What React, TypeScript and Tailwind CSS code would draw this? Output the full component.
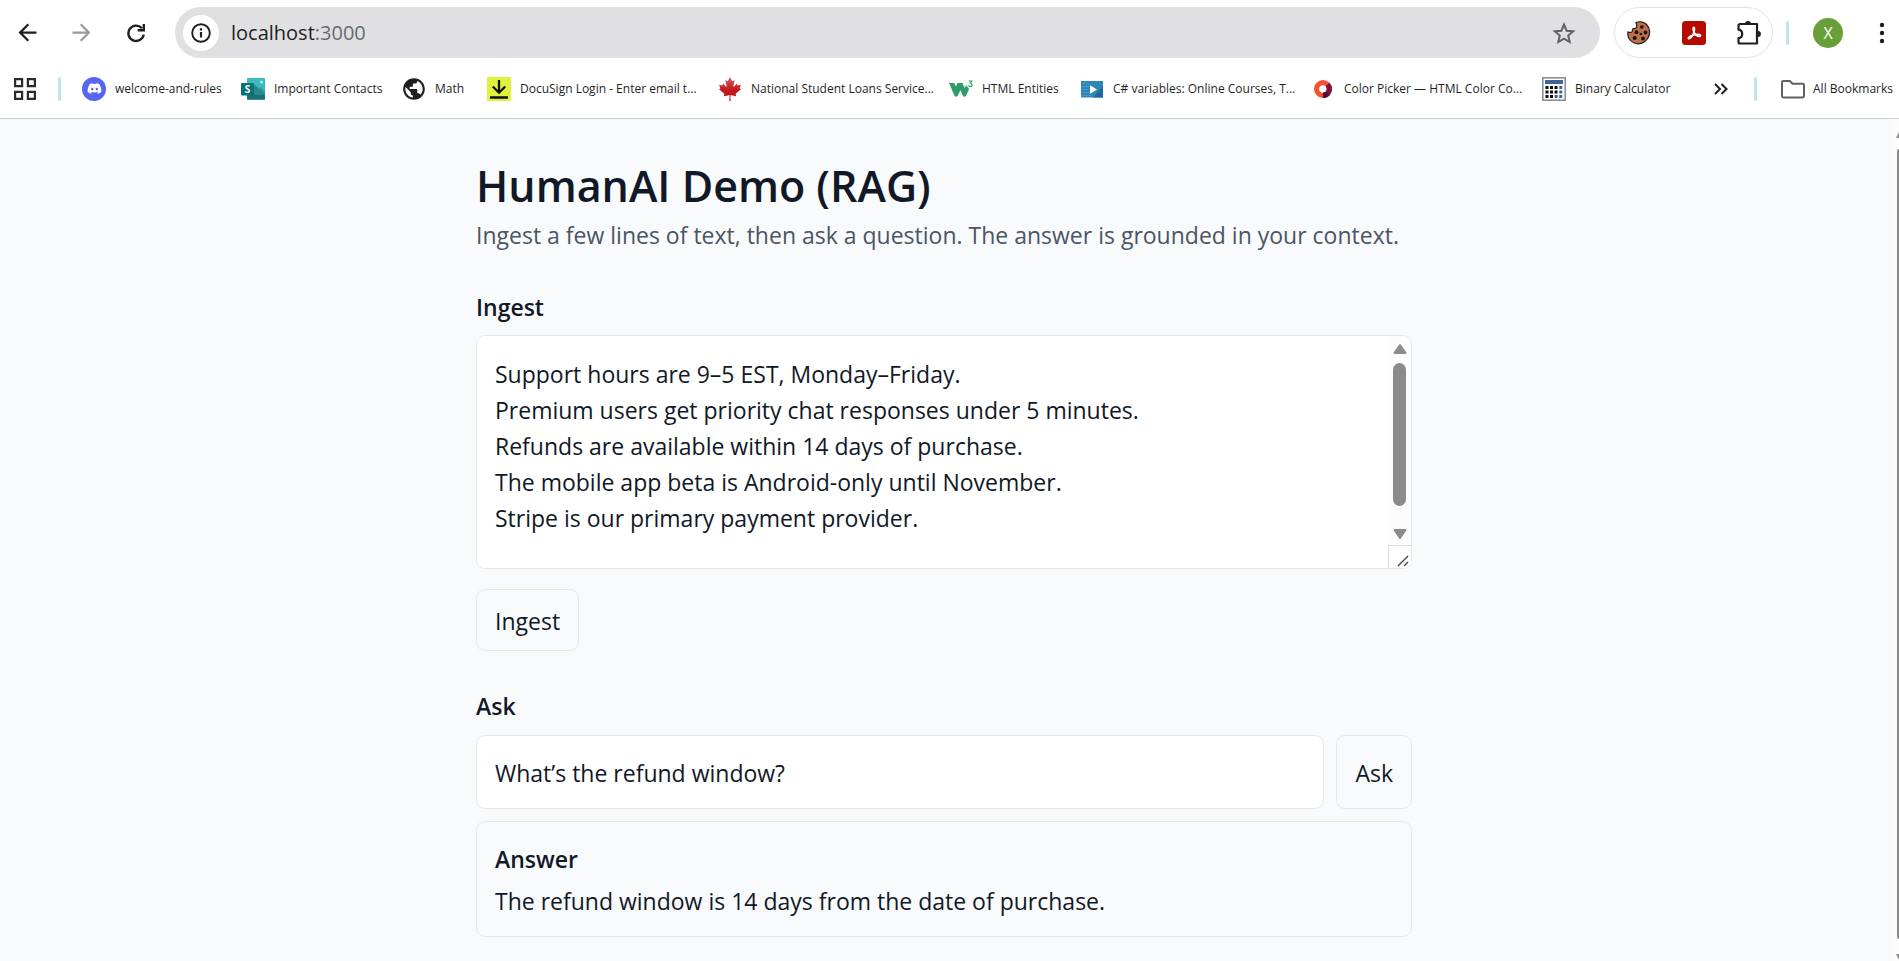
import { useState, type ReactNode } from "react";
import { FaCanadianMapleLeaf, FaDiscord } from "react-icons/fa";
import { MdArrowBack, MdArrowForward, MdPublic } from "react-icons/md";

function ReloadIcon() {
  return (
    <svg viewBox="0 0 20 20" className="size-5" fill="none" stroke="#1f1f1f" strokeWidth="2.4">
      <path d="M15.9 5.2A7.7 7.7 0 1 0 17.7 11.6" />
      <path d="M17.8 1v6.2h-6.2" />
    </svg>
  );
}

function InfoIcon() {
  return (
    <svg viewBox="0 0 20 20" className="size-5" fill="none" stroke="#1f1f1f" strokeWidth="1.9">
      <circle cx="10" cy="10" r="8.8" />
      <path d="M10 9v5.6M10 5.2v2.2" strokeWidth="2.2" />
    </svg>
  );
}

function StarIcon() {
  return (
    <svg viewBox="0 0 24 24" className="size-6" fill="none" stroke="#5f6064" strokeWidth="2">
      <path d="M12 3.6l2.6 6.1 6.6.5-5 4.4 1.5 6.4L12 17.6 6.300 21l1.500-6.400-5-4.400 6.600-.5z" strokeLinejoin="miter" />
    </svg>
  );
}

function CookieIcon() {
  return (
    <svg viewBox="0 0 24 24" className="size-6">
      <path
        d="M9 1.500C12 .2 16.500.5 19.500 3.500c3.500 3.500 4.200 9.500 1.200 14-3 5-9.500 6.500-14 4.200C2.500 19.500.3 15.500 1 11c1.500.8 3.800.5 4.200-.6.500-1.200-.1-1.800.5-2.400.7-.7 2.100.1 3.300-1 1.200-1.200.6-3.800 0-5.500z"
        fill="#b9714d"
        stroke="#2b1a14"
        strokeWidth="1.200"
      />
      <g fill="#20100c">
        <circle cx="14.800" cy="6" r="1.800" />
        <circle cx="9.500" cy="11.200" r="1.900" />
        <circle cx="18.500" cy="11.500" r="1.900" />
        <circle cx="13.800" cy="13" r="1.300" />
        <circle cx="7.700" cy="17" r="2" />
        <circle cx="16" cy="17.500" r="2" />
      </g>
    </svg>
  );
}

function AcrobatIcon() {
  return (
    <svg viewBox="0 0 24 24" className="size-6">
      <rect width="24" height="24" rx="3.500" fill="#b30b00" />
      <g fill="none" stroke="#fff" strokeWidth="1.600" strokeLinejoin="round" strokeLinecap="round">
        <path d="M12 11.500C11 9.200 10.700 6.500 11.700 6.300c1.200-.1 1 2.700-.1 5.700" />
        <path d="M11.600 12c-1.300 3.200-3.600 6-5 5.700-1.200-.6 1.200-2.700 4-3.500" />
        <path d="M12 11.500c1.500 2.400 4 4.200 5.800 3.900 1.400-.4.900-2-2-2-1.800 0-3.600.3-5.200.8" />
      </g>
    </svg>
  );
}

function PuzzleIcon() {
  return (
    <svg viewBox="0 0 24 24" className="size-6">
      <path
        d="M3 3h17v19.500H3a1.500 1.500 0 0 1-1.500-1.500v-3.800c2.300-.3 3.700-2 3.700-4.200S3.800 9 1.500 8.700V4.500A1.500 1.500 0 0 1 3 3z"
        fill="none"
        stroke="#1f1f1f"
        strokeWidth="2.200"
        strokeLinejoin="round"
      />
      <path d="M8 3a3 3 0 0 1 6 0zM21 10a2.900 2.900 0 0 1 0 5.800z" fill="#1f1f1f" />
    </svg>
  );
}

function MenuDotsIcon() {
  return (
    <svg viewBox="0 0 6 22" className="h-[22px] w-[6px]" fill="#1f1f1f">
      <circle cx="3" cy="3" r="2.200" />
      <circle cx="3" cy="11" r="2.200" />
      <circle cx="3" cy="19" r="2.200" />
    </svg>
  );
}

function AppsIcon() {
  return (
    <svg viewBox="0 0 22 22" className="size-[22px]" fill="none" stroke="#2b2b2e" strokeWidth="2.200">
      <path d="M1.100 1.100h7v7h-7zM13.900 1.100h7v7h-7zM1.100 13.900h7v7h-7zM13.900 13.900h7v7h-7z" />
    </svg>
  );
}

function DiscordIcon() {
  return (
    <span className="flex size-6 items-center justify-center rounded-full bg-[#5865f2] text-white">
      <FaDiscord size={15} />
    </span>
  );
}

function SharePointIcon() {
  return (
    <svg viewBox="0 0 24 24" className="size-6">
      <rect x="6" y="1" width="18" height="21.500" rx="1" fill="#3cbcc0" />
      <path d="M6 14l8-6 10 9v5.500H6z" fill="#23898d" />
      <path d="M17 11.500l2.500-1.500 4.500 4v3z" fill="#2c9a9e" />
      <path d="M6 18h18v3.500a1 1 0 0 1-1 1H7a1 1 0 0 1-1-1z" fill="#1a7276" />
      <circle cx="20.500" cy="5" r="1.500" fill="#b5eceb" />
      <rect y="6" width="13" height="12.500" rx="1" fill="#087276" />
      <text x="6.500" y="16" fontSize="10" fontWeight="700" fill="#fff" textAnchor="middle" fontFamily="Open Sans, sans-serif">
        S
      </text>
    </svg>
  );
}

function MapleLeafIcon() {
  return (
    <>
      <svg className="size-0" aria-hidden="true">
        <linearGradient id="leaf-shade" x1="0" y1="0" x2="0" y2="1">
          <stop offset="0" stopColor="#cf5f63" />
          <stop offset="0.55" stopColor="#c4181d" />
          <stop offset="1" stopColor="#b5161a" />
        </linearGradient>
      </svg>
      <FaCanadianMapleLeaf size={24} className="shrink-0" fill="url(#leaf-shade)" />
    </>
  );
}

function DownloadIcon() {
  return (
    <svg viewBox="0 0 24 24" className="size-6">
      <rect width="24" height="24" fill="#e0f23c" />
      <path d="M12 3v12M5.800 9.500l6.200 6.200 6.200-6.200M3 20.500h18" fill="none" stroke="#111" strokeWidth="2.300" />
    </svg>
  );
}

function W3Icon() {
  return (
    <svg viewBox="0 0 24 24" className="size-6">
      <path
        d="M0 6h5.200l1.800 3.600L8.600 6h4.800l2.200 5 1.700-2.800 2.800 4-3.500 7.300h-2.400l-2.800-6.300-3 6.300H5.800z"
        fill="#2d9e6b"
      />
      <path d="M19.600 4h3.200l-1.500 2c2.500.2 2.300 3.600 0 3.600-1 0-1.700-.4-1.900-1.200" fill="none" stroke="#2d9e6b" strokeWidth="1.200" />
    </svg>
  );
}

function CourseIcon() {
  return (
    <svg viewBox="0 0 24 24" className="size-6">
      <rect x="1" y="4" width="22" height="16.500" fill="#2f86b7" />
      <path d="M1 6.500h8M1 9.500h9M1 12.500h7M1 15.500h9M1 18.500h10" stroke="#3b9ccb" strokeWidth="1.200" />
      <path d="M13 20.500L23 9v11.500z" fill="#206a9b" />
      <path d="M10 8.200l7 4.200-7 4.300z" fill="#fff" />
    </svg>
  );
}

function ColorWheelIcon() {
  return (
    <svg viewBox="0 0 24 24" className="size-6" fill="none" strokeWidth="5.200">
      <circle cx="12" cy="12" r="6.400" stroke="#f5502f" />
      <path d="M16.500 7.500A6.400 6.400 0 0 1 12 18.400" stroke="#7d1142" />
      <path d="M16.500 16.500A6.400 6.400 0 0 1 12 18.400" stroke="#4d0d38" />
    </svg>
  );
}

function CalculatorIcon() {
  return (
    <svg viewBox="0 0 24 24" className="size-6">
      <rect x=".8" y=".8" width="22.400" height="22.400" fill="#fff" stroke="#8a8f94" strokeWidth="1.600" />
      <rect x="3" y="3" width="18" height="4" fill="#3c6594" />
      <path d="M3.500 10.500h12.500M3.500 15h12.500M3.500 19.500h8" stroke="#0c0c0c" strokeWidth="3" strokeDasharray="3 1.500" />
      <path d="M17.300 10.500h3M17.300 15h3M12.700 19.500h8" stroke="#3c6594" strokeWidth="3" strokeDasharray="3 1.500" />
    </svg>
  );
}

function FolderIcon() {
  return (
    <svg viewBox="0 0 24 20" className="h-5 w-6" fill="none" stroke="#5f6064" strokeWidth="2" strokeLinejoin="round">
      <path d="M2.300 2h6.500l2.800 2.800h10c.8 0 1.400.5 1.400 1.300v11c0 .8-.6 1.400-1.400 1.400H2.300c-.8 0-1.300-.6-1.300-1.400V3.300C1 2.500 1.500 2 2.300 2z" />
    </svg>
  );
}

function ChevronsIcon() {
  return (
    <svg viewBox="0 0 14 12" className="h-3 w-[14px]" fill="none" stroke="#1f1f1f" strokeWidth="2">
      <path d="M1 1l5 5-5 5M7.500 1l5 5-5 5" />
    </svg>
  );
}

function Arrow({ down = false }: { down?: boolean }) {
  return (
    <svg viewBox="0 0 14 12" className="h-3 w-[14px] shrink-0">
      <path
        d={down ? "M1.500 2h11L7 10z" : "M1.500 10h11L7 2z"}
        fill="#8b8b8b"
        stroke="#8b8b8b"
        strokeWidth="2"
        strokeLinejoin="round"
      />
    </svg>
  );
}

type Bookmark = { label: string; icon: ReactNode; width: string };

const bookmarks: Bookmark[] = [
  { label: "welcome-and-rules", icon: <DiscordIcon />, width: "w-[159px]" },
  { label: "Important Contacts", icon: <SharePointIcon />, width: "w-[161px]" },
  { label: "Math", icon: <MdPublic size={26} className="-m-px shrink-0" color="#1f1f1f" />, width: "w-[85px]" },
  { label: "DocuSign Login - Enter email t...", icon: <DownloadIcon />, width: "w-[231px]" },
  { label: "National Student Loans Service...", icon: <MapleLeafIcon />, width: "w-[231px]" },
  { label: "HTML Entities", icon: <W3Icon />, width: "w-[131px]" },
  { label: "C# variables: Online Courses, T...", icon: <CourseIcon />, width: "w-[231px]" },
  { label: "Color Picker — HTML Color Co...", icon: <ColorWheelIcon />, width: "w-[231px]" },
  { label: "Binary Calculator", icon: <CalculatorIcon />, width: "w-[130px]" },
];

function Divider() {
  return <span className="h-6 w-[3px] shrink-0 rounded-full bg-[#bde7ee]" />;
}

function BrowserBar() {
  return (
    <header className="border-b border-[#c8cacd] bg-white text-[#1f1f1f]">
      <div className="flex h-[65px] items-center px-[14px]">
        <nav className="flex items-center gap-[27px]">
          <button aria-label="Back">
            <MdArrowBack size={27} color="#1f1f1f" />
          </button>
          <button aria-label="Forward">
            <MdArrowForward size={27} color="#9b9b9b" />
          </button>
          <button aria-label="Reload" className="ml-1">
            <ReloadIcon />
          </button>
        </nav>
        <div className="ml-[29px] flex h-[51px] flex-1 items-center rounded-full bg-[#e0e0e2] pr-6 pl-2">
          <button aria-label="Site information" className="flex size-9 items-center justify-center rounded-full bg-white">
            <InfoIcon />
          </button>
          <p className="ml-3 flex-1 text-[20px]">
            localhost<span className="text-[#6a6b6e]">:3000</span>
          </p>
          <button aria-label="Bookmark this page">
            <StarIcon />
          </button>
        </div>
        <div className="ml-[14px] flex h-[51px] w-[159px] items-center justify-between rounded-full border border-[#e2e3e5] pr-[11px] pl-3">
          <button aria-label="Cookie editor">
            <CookieIcon />
          </button>
          <button aria-label="Adobe Acrobat">
            <AcrobatIcon />
          </button>
          <button aria-label="Extensions">
            <PuzzleIcon />
          </button>
        </div>
        <div className="ml-[13px] flex items-center">
          <Divider />
          <button
            aria-label="Profile"
            className="ml-6 flex size-[30px] items-center justify-center rounded-full bg-[#689f38] text-[16px] text-white"
          >
            X
          </button>
          <button aria-label="Menu" className="ml-9">
            <MenuDotsIcon />
          </button>
        </div>
      </div>
      <div className="flex h-[53px] items-start pr-[6px] pl-[14px] text-[12px] whitespace-nowrap">
        <div className="flex h-[47px] w-full items-center">
          <button aria-label="Apps" className="mr-[22px]">
            <AppsIcon />
          </button>
          <Divider />
          <nav className="ml-[21px] flex flex-1 items-center">
            {bookmarks.map((b) => (
              <a key={b.label} href="#" className={`flex shrink-0 items-center gap-[9px] ${b.width}`}>
                <span className="flex size-6 shrink-0 items-center justify-center">{b.icon}</span>
                {b.label}
              </a>
            ))}
          </nav>
          <button aria-label="More bookmarks" className="mr-[26px]">
            <ChevronsIcon />
          </button>
          <Divider />
          <a href="#" className="ml-6 flex items-center gap-2">
            <FolderIcon />
            All Bookmarks
          </a>
        </div>
      </div>
    </header>
  );
}

const initialContext = `Support hours are 9–5 EST, Monday–Friday.
Premium users get priority chat responses under 5 minutes.
Refunds are available within 14 days of purchase.
The mobile app beta is Android-only until November.
Stripe is our primary payment provider.`;

function Demo() {
  const [context, setContext] = useState(initialContext);
  const [question, setQuestion] = useState("What’s the refund window?");

  return (
    <main className="mx-auto w-full max-w-[936px] pt-10 pb-[22px] text-[23px] leading-9 text-[#111827]">
      <h1 className="text-[43px] leading-[54px] font-semibold">HumanAI Demo (RAG)</h1>
      <p className="mt-1 whitespace-nowrap text-[#4b5563]">
        Ingest a few lines of text, then ask a question. The answer is grounded in your context.
      </p>

      <section className="mt-9">
        <h2 className="font-semibold">
          <label htmlFor="context">Ingest</label>
        </h2>
        <div className="mt-[10px] flex h-[234px] overflow-hidden rounded-[9px] border border-[#e5e7eb] bg-white">
          <textarea
            id="context"
            value={context}
            onChange={(e) => setContext(e.target.value)}
            className="h-full flex-1 resize-none overflow-hidden bg-white px-[18px] py-5 outline-none"
          />
          <div className="flex w-[23px] flex-col items-center bg-[#fcfcfc] pt-[7px]">
            <Arrow />
            <span className="mt-2 h-[143px] w-[13px] rounded-full bg-[#8b8b8b]" />
            <span className="flex-1" />
            <Arrow down />
            <span className="mt-[5px] flex size-[23px] items-end justify-end border-t border-l border-[#dcdcdc] bg-white">
              <svg viewBox="0 0 14 14" className="size-[14px]" stroke="#444" strokeWidth="1.400">
                <path d="M1 12L11 2M7 12l4-4" />
              </svg>
            </span>
          </div>
        </div>
        <button className="mt-5 h-[62px] rounded-[9px] border border-[#e5e7eb] px-[18px] pt-[2px]">Ingest</button>
      </section>

      <section className="mt-[37px]">
        <h2 className="font-semibold">
          <label htmlFor="question">Ask</label>
        </h2>
        <div className="mt-[11px] flex h-[74px] gap-3">
          <input
            id="question"
            value={question}
            onChange={(e) => setQuestion(e.target.value)}
            className="min-w-0 flex-1 rounded-[9px] border border-[#e5e7eb] bg-white px-[18px] pt-[2px] outline-none"
          />
          <button className="rounded-[9px] border border-[#e5e7eb] px-[18px] pt-[2px]">Ask</button>
        </div>
        <div className="mt-3 rounded-[9px] border border-[#e5e7eb] px-[18px] pt-[19px] pb-[17px]">
          <h3 className="font-semibold">Answer</h3>
          <p className="mt-[6px]">The refund window is 14 days from the date of purchase.</p>
        </div>
      </section>
    </main>
  );
}

function PageScrollbar() {
  return (
    <div className="flex w-[7px] shrink-0 flex-col items-end overflow-hidden bg-[#fcfcfc] pt-3">
      <svg viewBox="0 0 3 8" className="h-2 w-[3px]">
        <path d="M0 7L3 1v6z" fill="#8b8b8b" />
      </svg>
      <span className="mt-[10px] w-[2px] flex-1 rounded-l-full bg-[#8b8b8b]" />
      <svg viewBox="0 0 3 8" className="mt-[14px] h-2 w-[3px]">
        <path d="M0 1h3v6z" fill="#8b8b8b" />
      </svg>
    </div>
  );
}

export default function App() {
  return (
    <div className="flex min-h-screen flex-col bg-[#f9fafc] font-['Open_Sans','Noto_Sans',sans-serif]">
      <BrowserBar />
      <div className="flex flex-1">
        <div className="flex-1 pr-1">
          <Demo />
        </div>
        <PageScrollbar />
      </div>
    </div>
  );
}
